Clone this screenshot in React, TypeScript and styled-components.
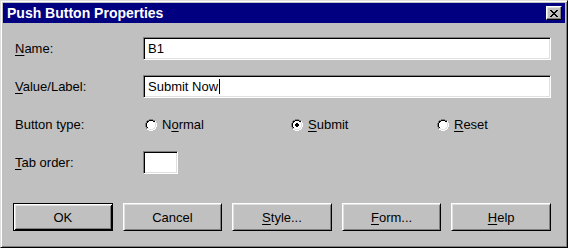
import styled, { createGlobalStyle } from "styled-components";

const GlobalStyle = createGlobalStyle`
  html, body {
    margin: 0;
    padding: 0;
    background: #c0c0c0;
  }
  body {
    font-family: "Liberation Sans", Arial, sans-serif;
    font-size: 13px;
    color: #000;
  }
`;

const Window = styled.div`
  box-sizing: border-box;
  width: 568px;
  height: 248px;
  background: #c0c0c0;
  border: 1px solid;
  border-color: #dfdfdf #000 #000 #dfdfdf;
  box-shadow: inset 1px 1px #fff, inset -1px -1px #808080;
  padding: 2px;
  display: flex;
  flex-direction: column;
`;

const TitleBar = styled.div`
  height: 20px;
  background: #000080;
  display: flex;
  align-items: center;
  justify-content: space-between;
  padding: 0 3px 0 4px;
`;

const Title = styled.span`
  color: #fff;
  font-weight: 700;
  font-size: 14px;
`;

const CloseButton = styled.div`
  box-sizing: border-box;
  width: 16px;
  height: 14px;
  background: #c0c0c0;
  border: 1px solid;
  border-color: #fff #000 #000 #fff;
  box-shadow: inset -1px -1px #808080, inset 1px 1px #dfdfdf;
  display: flex;
  align-items: center;
  justify-content: center;
`;

const Body = styled.div`
  flex: 1;
  min-width: 0;
  padding: 14px 14px 0 10px;
  display: flex;
  flex-direction: column;
`;

const Form = styled.div`
  display: grid;
  grid-template-columns: 128px minmax(0, 1fr);
  grid-auto-rows: 23px;
  row-gap: 15px;
  align-items: center;
  padding-left: 2px;
`;

const Label = styled.div`
  white-space: nowrap;
`;

const Key = styled.span`
  text-decoration: underline;
  text-underline-offset: 2px;
`;

const Field = styled.div<{ $width?: number }>`
  box-sizing: border-box;
  height: 23px;
  width: ${({ $width }) => ($width ? `${$width}px` : "100%")};
  background: #fff;
  border: 1px solid;
  border-color: #808080 #fff #fff #808080;
  box-shadow: inset 1px 1px #000, inset -1px -1px #dfdfdf;
  padding: 0 4px;
  display: flex;
  align-items: center;
  white-space: nowrap;
`;

const Caret = styled.span`
  display: inline-block;
  width: 1px;
  height: 15px;
  background: #000;
  margin-left: 1px;
`;

const RadioGroup = styled.div`
  display: grid;
  grid-template-columns: 146px 146px auto;
  padding-left: 2px;
`;

const RadioOption = styled.label`
  display: flex;
  align-items: center;
  gap: 5px;
`;

const ButtonRow = styled.div`
  display: flex;
  gap: 10px;
  margin-top: 29px;
`;

const PushButton = styled.div<{ $default?: boolean }>`
  box-sizing: border-box;
  width: 100px;
  height: 28px;
  display: flex;
  align-items: center;
  justify-content: center;
  background: #c0c0c0;
  border: 1px solid #000;
  border-color: ${({ $default }) => ($default ? "#000" : "#fff #000 #000 #fff")};
  box-shadow: ${({ $default }) =>
    $default
      ? "inset 1px 1px #fff, inset -1px -1px #000, inset 2px 2px #dfdfdf, inset -2px -2px #808080"
      : "inset 1px 1px #dfdfdf, inset -1px -1px #808080"};
`;

function CloseGlyph() {
  return (
    <svg width="8" height="7" viewBox="0 0 8 7" shapeRendering="crispEdges">
      <path
        fill="#000"
        d="M0 0h2v1H0zM6 0h2v1H6zM1 1h2v1H1zM5 1h2v1H5zM2 2h4v1H2zM3 3h2v1H3zM2 4h4v1H2zM1 5h2v1H1zM5 5h2v1H5zM0 6h2v1H0zM6 6h2v1H6z"
      />
    </svg>
  );
}

function Radio({ checked }: { checked?: boolean }) {
  return (
    <svg width="12" height="12" viewBox="0 0 12 12" shapeRendering="crispEdges">
      <path fill="#808080" d="M4 0h4v1H4zM2 1h2v1H2zM8 1h2v1H8zM1 2h1v2H1zM0 4h1v4H0zM1 8h1v2H1z" />
      <path fill="#fff" d="M10 2h1v2h-1zM11 4h1v4h-1zM10 8h1v2h-1zM8 10h2v1H8zM2 10h2v1H2zM4 11h4v1H4z" />
      <path fill="#000" d="M4 1h4v1H4zM2 2h2v1H2zM8 2h2v1H8zM2 3h1v1H2zM1 4h1v4H1zM2 8h1v1H2z" />
      <path fill="#dfdfdf" d="M9 3h1v1H9zM10 4h1v4h-1zM9 8h1v1H9zM8 9h2v1H8zM2 9h2v1H2zM4 10h4v1H4z" />
      <path fill="#fff" d="M4 2h4v1H4zM3 3h6v1H3zM2 4h8v4H2zM3 8h6v1H3zM4 9h4v1H4z" />
      {checked && <path fill="#000" d="M5 4h2v1H5zM4 5h4v2H4zM5 7h2v1H5z" />}
    </svg>
  );
}

export default function App() {
  return (
    <>
      <GlobalStyle />
      <Window>
        <TitleBar>
          <Title>Push Button Properties</Title>
          <CloseButton>
            <CloseGlyph />
          </CloseButton>
        </TitleBar>
        <Body>
          <Form>
            <Label>
              <Key>N</Key>ame:
            </Label>
            <Field>B1</Field>

            <Label>
              <Key>V</Key>alue/Label:
            </Label>
            <Field>
              Submit Now
              <Caret />
            </Field>

            <Label>Button type:</Label>
            <RadioGroup>
              <RadioOption>
                <Radio />
                <span>
                  N<Key>o</Key>rmal
                </span>
              </RadioOption>
              <RadioOption>
                <Radio checked />
                <span>
                  <Key>S</Key>ubmit
                </span>
              </RadioOption>
              <RadioOption>
                <Radio />
                <span>
                  <Key>R</Key>eset
                </span>
              </RadioOption>
            </RadioGroup>

            <Label>
              <Key>T</Key>ab order:
            </Label>
            <Field $width={35} />
          </Form>

          <ButtonRow>
            <PushButton $default>OK</PushButton>
            <PushButton>Cancel</PushButton>
            <PushButton>
              <span>
                <Key>S</Key>tyle...
              </span>
            </PushButton>
            <PushButton>
              <span>
                <Key>F</Key>orm...
              </span>
            </PushButton>
            <PushButton>
              <span>
                <Key>H</Key>elp
              </span>
            </PushButton>
          </ButtonRow>
        </Body>
      </Window>
    </>
  );
}
